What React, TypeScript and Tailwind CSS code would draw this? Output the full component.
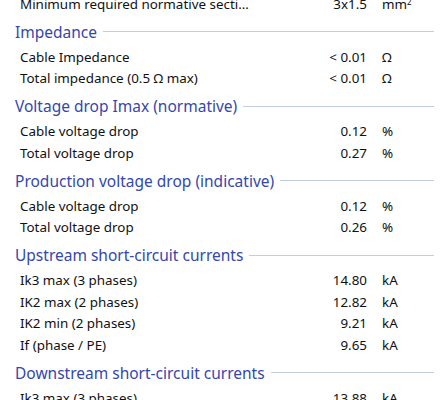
const sections = [
  {
    title: "Impedance",
    rows: [
      ["Cable Impedance", "< 0.01", "Ω"],
      ["Total impedance (0.5 Ω max)", "< 0.01", "Ω"],
    ],
  },
  {
    title: "Voltage drop Imax (normative)",
    rows: [
      ["Cable voltage drop", "0.12", "%"],
      ["Total voltage drop", "0.27", "%"],
    ],
  },
  {
    title: "Production voltage drop (indicative)",
    rows: [
      ["Cable voltage drop", "0.12", "%"],
      ["Total voltage drop", "0.26", "%"],
    ],
  },
  {
    title: "Upstream short-circuit currents",
    rows: [
      ["Ik3 max (3 phases)", "14.80", "kA"],
      ["IK2 max (2 phases)", "12.82", "kA"],
      ["IK2 min (2 phases)", "9.21", "kA"],
      ["If (phase / PE)", "9.65", "kA"],
    ],
  },
  {
    title: "Downstream short-circuit currents",
    rows: [["Ik3 max (3 phases)", "13.88", "kA"]],
  },
]

function Row({ label, value, unit }: { label: string; value: string; unit: React.ReactNode }) {
  return (
    <div className="flex h-[21.5px] items-center text-[13.4px] text-[#111]">
      <div className="flex-1 truncate pl-[20px]">{label}</div>
      <div className="w-[80px] whitespace-nowrap text-right">{value}</div>
      <div className="w-[75px] pl-[15px]">{unit}</div>
    </div>
  )
}

export default function App() {
  return (
    <div
      className="h-[400px] w-[442px] overflow-hidden bg-white"
      style={{ fontFamily: '"Noto Sans", "Open Sans", sans-serif' }}
    >
      <div className="-mt-[7px]">
        <Row
          label="Minimum required normative secti..."
          value="3x1.5"
          unit={
            <span>
              mm<sup className="text-[8px]">2</sup>
            </span>
          }
        />
        {sections.map((s) => (
          <div key={s.title}>
            <div className="flex h-[31.5px] items-center gap-[6px] pl-[15px] pr-[8px] pt-[3px]">
              <span className="whitespace-nowrap text-[15.5px] leading-[20px] text-[#3447ab]">{s.title}</span>
              <div className="h-px flex-1 bg-[#c3cde2]" />
            </div>
            {s.rows.map((r, i) => (
              <Row key={i} label={r[0]} value={r[1]} unit={r[2]} />
            ))}
          </div>
        ))}
      </div>
    </div>
  )
}
